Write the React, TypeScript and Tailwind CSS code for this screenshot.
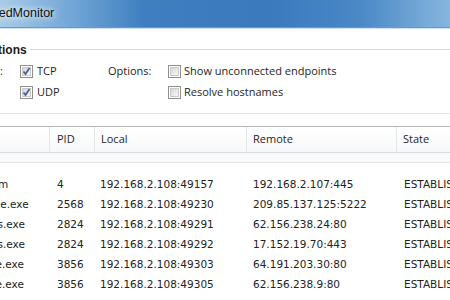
import React from "react";

function Check({ checked }: { checked?: boolean }) {
  return (
    <span className="w-[13px] h-[13px] border border-[#8f8f8f] bg-white p-[1px] flex shrink-0">
      <span className="flex-1 border border-[#c9c9c9] bg-gradient-to-br from-[#d6d6d6] to-[#f8f8f8] flex items-center justify-center">
        {checked && (
          <svg width="11" height="11" viewBox="0 0 11 11" className="-m-[2px]">
            <path d="M2.5 5.5 L4.5 8 L8.5 2" fill="none" stroke="#4a5f9a" strokeWidth="1.8" />
          </svg>
        )}
      </span>
    </span>
  );
}

const rows = [
  ["System", "4", "192.168.2.108:49157", "192.168.2.107:445", "ESTABLISHED"],
  ["chrome.exe", "2568", "192.168.2.108:49230", "209.85.137.125:5222", "ESTABLISHED"],
  ["iTunes.exe", "2824", "192.168.2.108:49291", "62.156.238.24:80", "ESTABLISHED"],
  ["iTunes.exe", "2824", "192.168.2.108:49292", "17.152.19.70:443", "ESTABLISHED"],
  ["iexplore.exe", "3856", "192.168.2.108:49303", "64.191.203.30:80", "ESTABLISHED"],
  ["iexplore.exe", "3856", "192.168.2.108:49305", "62.156.238.9:80", "ESTABLISHED"],
  ["iexplore.exe", "3856", "192.168.2.108:49306", "198.82.164.40:80", "ESTABLISHED"],
];

const shifts = ["ml-[-31px]", "ml-[-33px]", "ml-[-30px]", "ml-[-30px]", "ml-[-40px]", "ml-[-40px]", "ml-[-40px]"];

export default function App() {
  return (
    <div className="w-[450px] h-[300px] overflow-hidden bg-white relative font-['Open_Sans',sans-serif] text-[11px] text-[#1e1e1e]">
      {/* title bar */}
      <div className="h-[28px] bg-[linear-gradient(to_right,#a9cbe8_0%,#78abd9_14%,#3f7fc0_32%,#3a7abd_60%,#4a88c6_80%,#86b6de_100%)] flex items-center border-b border-[#6a9acb]">
        <span className="ml-[-43px] text-[12.5px] font-['Liberation_Sans',sans-serif] text-[#111] [text-shadow:0_0_6px_rgba(255,255,255,0.95),0_0_10px_rgba(255,255,255,0.7)]">
          NetSpeedMonitor
        </span>
      </div>
      <div className="h-[1px] bg-[#cfe0ee]" />

      {/* group box */}
      <div className="mt-[13px] h-[16px] flex items-center">
        <span className="ml-[-46px] font-bold text-[12px] font-['Liberation_Sans',sans-serif] text-[#1a1a1a]">Connections</span>
        <span className="ml-[3px] flex-1 h-[1px] bg-[#d5dde3] mt-[-2px]" />
      </div>
      <div className="mt-[3px] h-[21px] flex items-center">
        <span className="w-[66px] ml-[-63px] shrink-0 text-right">Protocols:</span>
        <span className="w-[17px] shrink-0" />
        <Check checked />
        <span className="ml-[4px] w-[71px]">TCP</span>
        <span className="w-[60px]">Options:</span>
        <Check />
        <span className="ml-[3px]">Show unconnected endpoints</span>
      </div>
      <div className="h-[21px] flex items-center">
        <span className="w-[20px] shrink-0" />
        <Check checked />
        <span className="ml-[4px] w-[131px]">UDP</span>
        <Check />
        <span className="ml-[3px]">Resolve hostnames</span>
      </div>
      <div className="mt-[10px] h-[1px] bg-[#e2e6e9]" />

      {/* list view */}
      <div className="mt-[12px] border-t border-[#b3b7bb]">
        <div className="h-[26px] grid grid-cols-[50px_45px_152px_150px_1fr] bg-gradient-to-b from-white to-[#f7f8f9] border-b border-[#d8dcdf]">
          <div className="border-r border-[#e4e7ea]" />
          <div className="border-r border-[#e4e7ea] pl-[7px] flex items-center">PID</div>
          <div className="border-r border-[#e4e7ea] pl-[6px] flex items-center">Local</div>
          <div className="border-r border-[#e4e7ea] pl-[6px] flex items-center">Remote</div>
          <div className="pl-[6px] flex items-center">State</div>
        </div>
        <div className="h-[10px] bg-[#fafafa] border-b border-[#e3e3e3]" />
        <div className="mt-[12px] font-['DejaVu_Sans',sans-serif] text-[10.5px] text-[#222]">
          {rows.map((r, i) => (
            <div key={i} className="h-[20px] grid grid-cols-[50px_45px_152px_150px_1fr] items-center whitespace-nowrap">
              <div className="overflow-visible">
                <span className={shifts[i]}>{r[0]}</span>
              </div>
              <div className="pl-[7px]">{r[1]}</div>
              <div className="pl-[5px]">{r[2]}</div>
              <div className="pl-[6px]">{r[3]}</div>
              <div className="pl-[7px]">{r[4]}</div>
            </div>
          ))}
        </div>
      </div>
    </div>
  );
}
